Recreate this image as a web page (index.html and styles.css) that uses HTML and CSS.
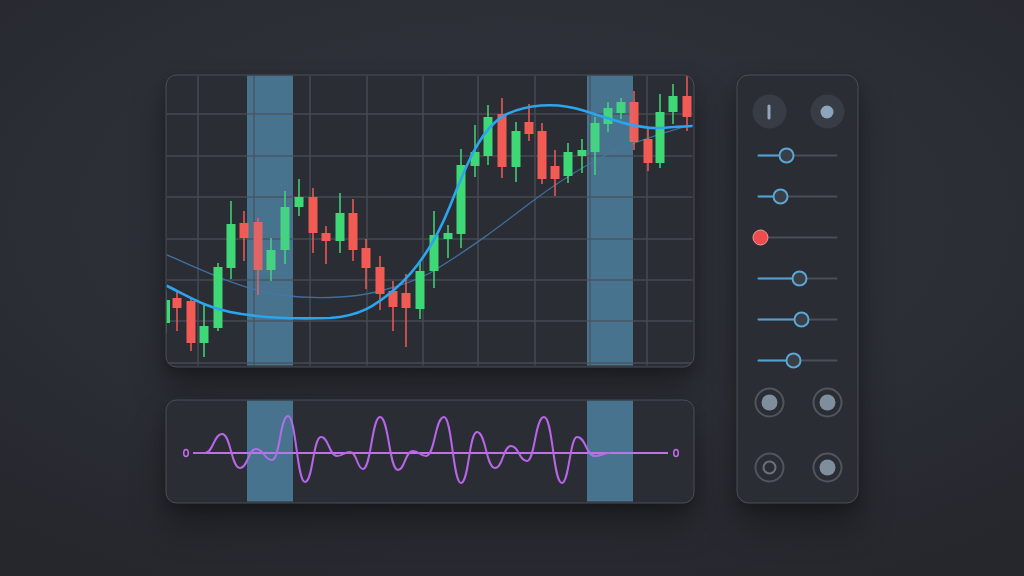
FILE: index.html
```html
<!DOCTYPE html>
<html lang="en">
<head>
<meta charset="utf-8">
<title>Trading chart</title>
<link rel="stylesheet" href="styles.css">
</head>
<body>
<div class="stage">
  <div class="left">
    <div class="panel chart">
      <svg class="plot" viewBox="166.5 74.5 526 290" width="526" height="290">
        <rect class="band" x="247" y="60" width="46" height="320"/>
        <rect class="band" x="587" y="60" width="46" height="320"/>
        <g class="grid">
          <line x1="198" y1="60" x2="198" y2="380"/>
          <line x1="254" y1="60" x2="254" y2="380"/>
          <line x1="310" y1="60" x2="310" y2="380"/>
          <line x1="367" y1="60" x2="367" y2="380"/>
          <line x1="423" y1="60" x2="423" y2="380"/>
          <line x1="478" y1="60" x2="478" y2="380"/>
          <line x1="535" y1="60" x2="535" y2="380"/>
          <line x1="590" y1="60" x2="590" y2="380"/>
          <line x1="647" y1="60" x2="647" y2="380"/>
          <line x1="150" y1="113" x2="700" y2="113"/>
          <line x1="150" y1="155" x2="700" y2="155"/>
          <line x1="150" y1="196" x2="700" y2="196"/>
          <line x1="150" y1="238" x2="700" y2="238"/>
          <line x1="150" y1="279" x2="700" y2="279"/>
          <line x1="150" y1="320" x2="700" y2="320"/>
          <line x1="150" y1="362" x2="700" y2="362"/>
        </g>
        <path class="ma-thin" d="M165,253 C200,268 240,288 280,294 C310,298 350,298 380,290 C400,285 415,280 430,272 C470,248 500,225 530,202 C570,172 610,150 640,140 C660,133 680,126 694,124"/>
        <g class="up">
          <line x1="166" y1="290" x2="166" y2="332"/><rect x="161" y="299" width="9" height="23"/>
          <line x1="204" y1="304" x2="204" y2="356"/><rect x="199.5" y="325" width="9" height="17"/>
          <line x1="218" y1="262" x2="218" y2="330"/><rect x="213.5" y="266" width="9" height="61"/>
          <line x1="231" y1="200" x2="231" y2="278"/><rect x="226.5" y="223" width="9" height="44"/>
          <line x1="271" y1="237" x2="271" y2="280"/><rect x="266.5" y="249" width="9" height="20"/>
          <line x1="285" y1="190" x2="285" y2="263"/><rect x="280.5" y="206" width="9" height="43"/>
          <line x1="299" y1="178" x2="299" y2="215"/><rect x="294.5" y="196" width="9" height="10"/>
          <line x1="340" y1="192" x2="340" y2="252"/><rect x="335.5" y="212" width="9" height="28"/>
          <line x1="420" y1="262" x2="420" y2="318"/><rect x="415.5" y="270" width="9" height="38"/>
          <line x1="434" y1="210" x2="434" y2="287"/><rect x="429.5" y="234" width="9" height="36"/>
          <line x1="448" y1="224" x2="448" y2="257"/><rect x="443.5" y="232" width="9" height="6"/>
          <line x1="461" y1="148" x2="461" y2="247"/><rect x="456.5" y="164" width="9" height="69"/>
          <line x1="475" y1="124" x2="475" y2="176"/><rect x="470.5" y="151" width="9" height="14"/>
          <line x1="488" y1="104" x2="488" y2="164"/><rect x="483.5" y="116" width="9" height="39"/>
          <line x1="516" y1="121" x2="516" y2="181"/><rect x="511.5" y="130" width="9" height="36"/>
          <line x1="568" y1="142" x2="568" y2="182"/><rect x="563.5" y="151" width="9" height="24"/>
          <line x1="582" y1="138" x2="582" y2="172"/><rect x="577.5" y="149" width="9" height="6"/>
          <line x1="595" y1="116" x2="595" y2="174"/><rect x="590.5" y="122" width="9" height="29"/>
          <line x1="608" y1="101" x2="608" y2="131"/><rect x="603.5" y="107" width="9" height="16"/>
          <line x1="621" y1="97" x2="621" y2="118"/><rect x="616.5" y="101" width="9" height="11"/>
          <line x1="660" y1="93" x2="660" y2="167"/><rect x="655.5" y="111" width="9" height="51"/>
          <line x1="673" y1="83" x2="673" y2="123"/><rect x="668.5" y="95" width="9" height="16"/>
        </g>
        <g class="down">
          <line x1="177" y1="290" x2="177" y2="330"/><rect x="172.5" y="297" width="9" height="10"/>
          <line x1="191" y1="296" x2="191" y2="350"/><rect x="186.5" y="300" width="9" height="42"/>
          <line x1="244" y1="210" x2="244" y2="260"/><rect x="239.5" y="222" width="9" height="15"/>
          <line x1="258" y1="217" x2="258" y2="294"/><rect x="253.5" y="221" width="9" height="48"/>
          <line x1="313" y1="187" x2="313" y2="252"/><rect x="308.5" y="196" width="9" height="36"/>
          <line x1="326" y1="225" x2="326" y2="263"/><rect x="321.5" y="232" width="9" height="8"/>
          <line x1="353" y1="198" x2="353" y2="260"/><rect x="348.5" y="212" width="9" height="37"/>
          <line x1="366" y1="238" x2="366" y2="288"/><rect x="361.5" y="247" width="9" height="20"/>
          <line x1="380" y1="255" x2="380" y2="309"/><rect x="375.5" y="266" width="9" height="27"/>
          <line x1="393" y1="280" x2="393" y2="330"/><rect x="388.5" y="290" width="9" height="16"/>
          <line x1="406" y1="273" x2="406" y2="346"/><rect x="401.5" y="292" width="9" height="15"/>
          <line x1="502" y1="97" x2="502" y2="177"/><rect x="497.5" y="113" width="9" height="53"/>
          <line x1="529" y1="103" x2="529" y2="140"/><rect x="524.5" y="121" width="9" height="12"/>
          <line x1="542" y1="122" x2="542" y2="183"/><rect x="537.5" y="130" width="9" height="48"/>
          <line x1="555" y1="149" x2="555" y2="195"/><rect x="550.5" y="165" width="9" height="13"/>
          <line x1="634" y1="90" x2="634" y2="149"/><rect x="629.5" y="101" width="9" height="40"/>
          <line x1="648" y1="127" x2="648" y2="170"/><rect x="643.5" y="138" width="9" height="24"/>
          <line x1="687" y1="75" x2="687" y2="130"/><rect x="682.5" y="95" width="9" height="21"/>
        </g>
        <rect class="band-top" x="247" y="60" width="46" height="320"/>
        <rect class="band-top" x="587" y="60" width="46" height="320"/>
        <path class="ma-thick" d="M165,284 C190,296 205,306 230,311 C260,317 300,318 330,317 C360,315 375,305 395,288 C418,268 436,240 450,205 C466,165 480,128 505,114 C525,104 555,100 585,110 C615,120 640,128 660,127 C675,126 685,125 696,125"/>
      </svg>
    </div>
    <div class="panel osc">
      <svg class="plot" viewBox="166.5 399.5 526 101" width="526" height="101">
        <rect class="band" x="247" y="390" width="46" height="120"/>
        <rect class="band" x="587" y="390" width="46" height="120"/>
        <line class="baseline" x1="193" y1="452" x2="668" y2="452"/>
        <path class="wave" d="M193,452 L205,452 C213,452 214,433 222,433 C231,433 231,467 240,467 C248,467 248,448 256,448 C264,448 264,459 272,459 C280,459 280,415 288,415 C296,415 297,481 305,481 C313,481 313,436 321,436 C329,436 329,455 337,455 C343,455 344,451 350,451 C357,451 357,468 363,468 C371,468 372,416 380,416 C389,416 389,469 398,469 C405,469 405,450 413,450 C419,450 420,455 426,455 C435,455 435,416 444,416 C452,416 453,482 461,482 C469,482 469,431 477,431 C486,431 486,467 495,467 C503,467 503,445 511,445 C519,445 519,460 527,460 C535,460 535,416 544,416 C553,416 553,482 562,482 C569,482 570,436 577,436 C586,436 586,455 595,455 C602,455 603,452 610,452"/>
        <ellipse class="cap" cx="186" cy="452" rx="2.3" ry="3.6"/>
        <ellipse class="cap" cx="676" cy="452" rx="2.3" ry="3.6"/>
        <rect class="band-top" x="247" y="390" width="46" height="120"/>
        <rect class="band-top" x="587" y="390" width="46" height="120"/>
      </svg>
    </div>
  </div>
  <div class="panel controls">
    <div class="btn-row">
      <div class="round-btn"><span class="bar"></span></div>
      <div class="round-btn"><span class="dot"></span></div>
    </div>
    <div class="slider first"><div class="track"><div class="fill" style="width:29px"></div></div><span class="thumb" style="left:21px"></span></div>
    <div class="slider"><div class="track"><div class="fill" style="width:23px"></div></div><span class="thumb" style="left:15px"></span></div>
    <div class="slider"><div class="track"></div><span class="thumb red" style="left:-5px"></span></div>
    <div class="slider"><div class="track"><div class="fill" style="width:42px"></div></div><span class="thumb" style="left:34px"></span></div>
    <div class="slider"><div class="track"><div class="fill" style="width:44px"></div></div><span class="thumb" style="left:36px"></span></div>
    <div class="slider"><div class="track"><div class="fill" style="width:36px"></div></div><span class="thumb" style="left:28px"></span></div>
    <div class="radio-row first-radios">
      <div class="radio"><span class="pip"></span></div>
      <div class="radio"><span class="pip"></span></div>
    </div>
    <div class="radio-row second-radios">
      <div class="radio"><span class="pip hollow"></span></div>
      <div class="radio"><span class="pip"></span></div>
    </div>
  </div>
</div>
</body>
</html>
```
FILE: styles.css
```css
* { box-sizing: border-box; }

html, body {
  margin: 0;
  height: 100%;
}

body {
  width: 1024px;
  height: 576px;
  overflow: hidden;
  display: flex;
  align-items: center;
  justify-content: center;
  font-family: "Liberation Sans", Arial, sans-serif;
  background:
    radial-gradient(ellipse 75% 70% at 50% 38%, #30333b 0%, #2c2f36 55%, #25272d 100%);
}

.stage {
  display: flex;
  gap: 42px;
  align-items: flex-start;
  transform: translate(-0.5px, 0.5px);
}

.left {
  display: flex;
  flex-direction: column;
  gap: 32px;
}

.panel {
  border: 1.5px solid #4b4f57;
  background: #2a2d34;
  box-shadow: 0 22px 36px rgba(0, 0, 0, 0.32), 0 6px 12px rgba(0, 0, 0, 0.18);
  overflow: hidden;
}

.chart {
  width: 529px;
  height: 293px;
  border-radius: 11px;
}

.osc {
  width: 529px;
  height: 104px;
  border-radius: 11px;
}

.plot {
  display: block;
}

.band {
  fill: rgba(95, 178, 225, 0.46);
}

.band-top {
  fill: rgba(110, 180, 222, 0.12);
}

.grid line {
  stroke: #464a52;
  stroke-width: 1.5;
}

.up line { stroke: #3fd877; stroke-width: 1.5; }
.up rect { fill: #3fd877; }
.down line { stroke: #f25a54; stroke-width: 1.5; }
.down rect { fill: #f25a54; }

.ma-thick {
  fill: none;
  stroke: #2aa5ee;
  stroke-width: 2.6;
  stroke-linecap: round;
}

.ma-thin {
  fill: none;
  stroke: #3f6fa0;
  stroke-width: 1.3;
}

.baseline {
  stroke: #c46ee9;
  stroke-width: 2;
}

.wave {
  fill: none;
  stroke: #b865ea;
  stroke-width: 2;
  stroke-linejoin: round;
}

.cap {
  fill: none;
  stroke: #c26ce9;
  stroke-width: 1.5;
}

/* controls panel */
.controls {
  width: 122px;
  height: 429px;
  border-radius: 12px;
  display: flex;
  flex-direction: column;
  align-items: center;
  padding-top: 19.5px;
}

.btn-row {
  display: flex;
  gap: 24px;
  margin-left: 2px;
}

.round-btn {
  width: 34px;
  height: 34px;
  border-radius: 50%;
  background: #383c44;
  display: flex;
  align-items: center;
  justify-content: center;
}

.bar {
  width: 2.5px;
  height: 15px;
  border-radius: 2px;
  background: #90a6bd;
}

.dot {
  width: 13px;
  height: 13px;
  border-radius: 50%;
  background: #8ea4bb;
}

.slider {
  position: relative;
  width: 80px;
  height: 16px;
  display: flex;
  align-items: center;
  margin-top: 25px;
}

.slider.first {
  margin-top: 19px;
}

.track {
  width: 100%;
  height: 2px;
  background: #4a4e56;
  border-radius: 1px;
}

.fill {
  height: 100%;
  background: #4f9fd0;
  border-radius: 1px;
}

.thumb {
  position: absolute;
  top: 0;
  width: 16px;
  height: 16px;
  border-radius: 50%;
  background: #3a3e47;
  border: 2px solid #5aa6d4;
}

.thumb.red {
  top: 0;
  width: 16px;
  height: 16px;
  background: #ee4c4c;
  border: 1.5px solid #f09a9a;
}

.radio-row {
  display: flex;
  gap: 28px;
  margin-left: 2px;
}

.first-radios { margin-top: 19px; }
.second-radios { margin-top: 35px; }

.radio {
  width: 30px;
  height: 30px;
  border-radius: 50%;
  border: 2px solid #50555e;
  display: flex;
  align-items: center;
  justify-content: center;
}

.pip {
  width: 16px;
  height: 16px;
  border-radius: 50%;
  background: #7f8e9d;
}

.pip.hollow {
  width: 14px;
  height: 14px;
  background: transparent;
  border: 2px solid #6a717b;
}
```
